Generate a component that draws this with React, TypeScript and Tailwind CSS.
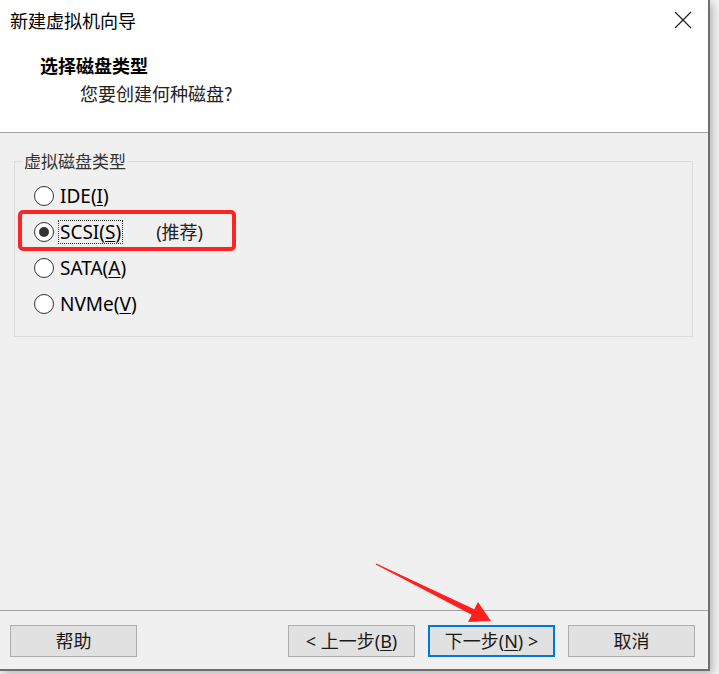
import React from 'react';

const cjk = "font-['Noto_Sans_CJK_SC',sans-serif]";
const latin = "font-['Noto_Sans','Noto_Sans_CJK_SC',sans-serif]";

type Option = { id: string; label: string; key: string; note?: string };

const options: Option[] = [
  { id: 'ide', label: 'IDE(', key: 'I' },
  { id: 'scsi', label: 'SCSI(', key: 'S', note: '(推荐)' },
  { id: 'sata', label: 'SATA(', key: 'A' },
  { id: 'nvme', label: 'NVMe(', key: 'V' },
];

function Radio({ checked }: { checked: boolean }) {
  return (
    <span className="w-[20px] h-[20px] rounded-full border border-[#333333] bg-white flex items-center justify-center shrink-0">
      {checked && <span className="w-[10px] h-[10px] rounded-full bg-[#333333]" />}
    </span>
  );
}

function Button({ children, primary }: { children: React.ReactNode; primary?: boolean }) {
  return (
    <button
      className={
        primary
          ? `w-[127px] h-[32px] bg-[#e1e1e1] border-2 border-[#0078d7] text-[18px] text-[#1a1a1a] ${latin}`
          : `w-[127px] h-[32px] bg-[#e1e1e1] border border-[#adadad] text-[18px] text-[#1a1a1a] ${latin}`
      }
    >
      {children}
    </button>
  );
}

export default function App() {
  const selected = 'scsi';

  return (
    <div className="w-[719px] h-[674px] bg-[#f4f4f4] overflow-hidden">
      <div className="relative w-[710px] h-[671px] flex flex-col bg-[#f0f0f0] border-r-2 border-b-2 border-[#6f6f6f] shadow-[3px_3px_8px_rgba(0,0,0,0.25)]">
        {/* Header */}
        <div className="h-[133px] bg-white border-b border-[#a0a0a0] shrink-0">
          <div className="h-[40px] flex items-center justify-between pl-[10px] pr-[16px]">
            <span className={`text-[18px] text-black ${cjk}`}>新建虚拟机向导</span>
            <svg width="18" height="18" viewBox="0 0 18 18" className="text-[#222]">
              <path d="M1 1L17 17M17 1L1 17" stroke="currentColor" strokeWidth="1.2" />
            </svg>
          </div>
          <div className={`pl-[40px] mt-[12px] text-[18px] font-bold leading-[26px] text-black ${cjk}`}>选择磁盘类型</div>
          <div className={`pl-[80px] mt-[2px] text-[18px] leading-[26px] text-[#222] ${cjk}`}>您要创建何种磁盘?</div>
        </div>

        {/* Body */}
        <div className="flex-1 pt-[16px] px-[14px] pr-[15px]">
          <fieldset className="border border-[#dcdcdc] h-[188px]">
            <legend className={`ml-[8px] px-[1px] text-[17px] leading-[24px] text-[#333] ${cjk}`}>虚拟磁盘类型</legend>
            <div className="flex flex-col pt-[5px] pl-[19px]">
              {options.map((o) => (
                <div key={o.id} className="h-[36px] flex items-center">
                  <Radio checked={o.id === selected} />
                  <span
                    className={
                      o.id === selected
                        ? `ml-[5px] px-[1px] outline-1 outline-dotted outline-[#333] text-[19px] leading-[22px] text-black ${latin}`
                        : `ml-[5px] px-[1px] text-[19px] leading-[22px] text-black ${latin}`
                    }
                  >
                    {o.label}
                    <span className="underline underline-offset-2">{o.key}</span>)
                  </span>
                  {o.note && <span className={`ml-[34px] text-[18px] text-[#222] ${latin}`}>{o.note}</span>}
                </div>
              ))}
            </div>
          </fieldset>
        </div>

        {/* Footer */}
        <div className="h-[59px] shrink-0 border-t border-[#a0a0a0] flex items-center pl-[10px] pt-[2px]">
          <Button>帮助</Button>
          <div className="ml-auto mr-[13px] flex gap-[13px]">
            <Button>
              {'<  上一步('}
              <span className="underline underline-offset-2">B</span>)
            </Button>
            <Button primary>
              下一步(<span className="underline underline-offset-2">N</span>)&nbsp;&gt;
            </Button>
            <Button>取消</Button>
          </div>
        </div>

        {/* Annotations */}
        <div className="absolute left-[18px] top-[210px] w-[218px] h-[41px] border-4 border-[#ff2424] rounded-[5px] pointer-events-none" />
        <svg className="absolute left-0 top-0 pointer-events-none" width="710" height="671">
          <polygon
            points="376.3,563.4 474.3,609.3 478,602 491,621 468,622 471.7,614.7 375.7,564.6"
            fill="#ff1f1f"
          />
        </svg>
      </div>
    </div>
  );
}
